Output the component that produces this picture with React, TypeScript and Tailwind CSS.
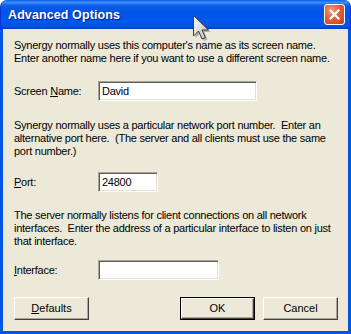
import type { ReactNode } from "react";

const body = "font-['Liberation_Sans',Arial,sans-serif] text-[11px] leading-[13px] tracking-[-0.25px] text-black";

function Field({ width, value }: { width: string; value?: string }) {
  return (
    <div
      className={`${width} h-[20px] bg-white border border-t-[#a9a799] border-l-[#a9a799] border-b-white border-r-white shadow-[inset_1px_1px_0_#5e5d56,inset_-1px_-1px_0_#e3e0d3] px-[3px] flex items-center`}
    >
      {value}
    </div>
  );
}

function Button({ children, primary }: { children: ReactNode; primary?: boolean }) {
  return (
    <div className={`w-[75px] h-[23px] ${primary ? "border border-black" : ""}`}>
      <div className="w-full h-full bg-[#ece9d8] border border-t-white border-l-white border-b-[#404040] border-r-[#404040] shadow-[inset_-1px_-1px_0_#aca899] flex items-center justify-center">
        {children}
      </div>
    </div>
  );
}

export default function App() {
  return (
    <div className="w-[351px] h-[334px] relative flex flex-col overflow-hidden bg-white">
      {/* Title bar */}
      <div className="h-[29px] shrink-0 rounded-t-[7px] bg-[linear-gradient(to_bottom,#0a5ee8_0%,#3d8ff8_8%,#0a5de9_20%,#0054e3_45%,#0058ee_75%,#0050dc_92%,#003fc0_100%)] flex items-center pl-[7px] pr-[5px] border-x border-[#0831d9]">
        <span className="font-['Liberation_Sans',Arial,sans-serif] font-bold text-[12.5px] text-white [text-shadow:1px_1px_0_#0a1c7a] tracking-[0.1px] mt-[1px]">
          Advanced Options
        </span>
        <div className="ml-auto w-[21px] h-[21px] rounded-[3px] border border-white bg-[radial-gradient(circle_at_35%_30%,#f0a080_0%,#e2613a_45%,#c8401a_100%)] flex items-center justify-center">
          <svg width="11" height="11" viewBox="0 0 11 11">
            <path d="M1.5 1.5 L9.5 9.5 M9.5 1.5 L1.5 9.5" stroke="white" strokeWidth="2.2" strokeLinecap="square" />
          </svg>
        </div>
      </div>

      {/* Client area */}
      <div className="flex-1 bg-[#ece9d8] border-x-[3px] border-b-[3px] border-[#0055e5] shadow-[-1px_0_0_#0831d9]">
        <div className={`${body} pl-[11px] pr-[2px] pt-[10px] whitespace-nowrap`}>
          <p>
            Synergy normally uses this computer's name as its screen name.
            <br />
            Enter another name here if you want to use a different screen name.
          </p>
          <div className="flex items-center mt-[16px]">
            <span className="w-[84px]">
              Screen <u>N</u>ame:
            </span>
            <Field width="w-[159px]" value="David" />
          </div>

          <p className="mt-[18px]">
            Synergy normally uses a particular network port number.&nbsp; Enter an
            <br />
            alternative port here.&nbsp; (The server and all clients must use the same
            <br />
            port number.)
          </p>
          <div className="flex items-center mt-[14px]">
            <span className="w-[84px]">
              <u>P</u>ort:
            </span>
            <Field width="w-[60px]" value="24800" />
          </div>

          <p className="mt-[17px]">
            The server normally listens for client connections on all network
            <br />
            interfaces.&nbsp; Enter the address of a particular interface to listen on just
            <br />
            that interface.
          </p>
          <div className="flex items-center mt-[12px]">
            <span className="w-[84px]">
              <u>I</u>nterface:
            </span>
            <Field width="w-[121px]" />
          </div>

          <div className="flex items-center mt-[17px] pr-[8px] tracking-normal">
            <Button>
              <u>D</u>efaults
            </Button>
            <div className="ml-auto flex gap-[8px]">
              <Button primary>OK</Button>
              <Button>Cancel</Button>
            </div>
          </div>
        </div>
      </div>

      {/* Mouse pointer */}
      <svg className="absolute left-[191px] top-[14px]" width="24" height="28" viewBox="0 0 24 28">
        <defs>
          <linearGradient id="ptr" x1="0" y1="0" x2="1" y2="1">
            <stop offset="0" stopColor="#ffffff" />
            <stop offset="1" stopColor="#b8b8b8" />
          </linearGradient>
        </defs>
        <path d="M4.5 3.5 L4.5 24 L9.5 19 L13 27 L16.5 25.5 L13 18 L19.5 18 Z" fill="rgba(0,0,0,0.25)" />
        <path d="M2.5 1.5 L2.5 22 L7.5 17 L11 25 L14.5 23.5 L11 16 L17.5 16 Z" fill="url(#ptr)" stroke="#3a3a3a" strokeWidth="1" strokeLinejoin="round" />
      </svg>
    </div>
  );
}
